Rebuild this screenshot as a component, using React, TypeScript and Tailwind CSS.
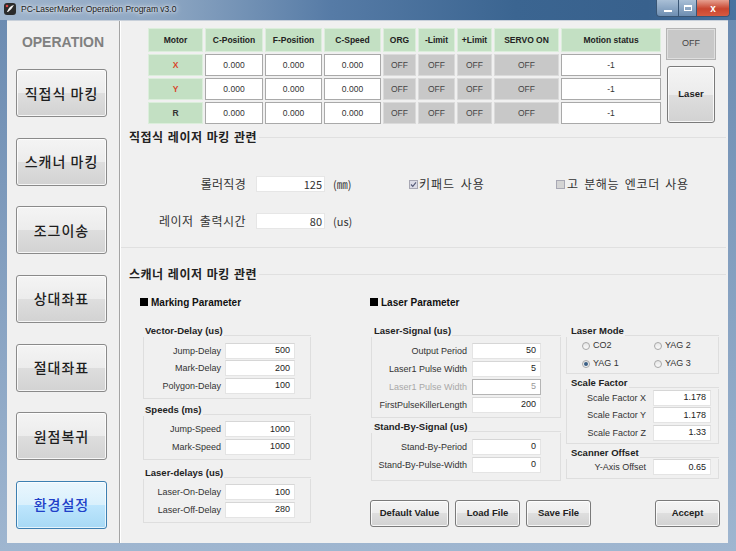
import React from "react";

const FONT = "font-['Liberation_Sans','Noto_Sans_CJK_KR',sans-serif]";
const KR = "font-['Noto_Sans_CJK_KR','Liberation_Sans',sans-serif]";

const COLS = [
  { h: "Motor", w: "w-[55px]" },
  { h: "C-Position", w: "w-[58px]" },
  { h: "F-Position", w: "w-[57px]" },
  { h: "C-Speed", w: "w-[57px]" },
  { h: "ORG", w: "w-[33px]" },
  { h: "-Limit", w: "w-[37px]" },
  { h: "+Limit", w: "w-[35px]" },
  { h: "SERVO ON", w: "w-[65px]" },
  { h: "Motion status", w: "w-[100px]" },
];

function HeadCell({ children, w }: { children: React.ReactNode; w: string }) {
  return (
    <div className={`${w} h-[24px] flex items-center justify-center bg-[#c3e0c3] border border-[#dbeedb] text-[8.5px] font-bold text-[#222]`}>
      {children}
    </div>
  );
}
function MotorCell({ children, red }: { children: React.ReactNode; red?: boolean }) {
  return (
    <div className={`w-[55px] h-[22px] flex items-center justify-center bg-[#c3e0c3] border border-[#dbeedb] text-[8.5px] font-bold ${red ? "text-[#d9452b]" : "text-[#333]"}`}>
      {children}
    </div>
  );
}
function ValCell({ w, children }: { w: string; children: React.ReactNode }) {
  return (
    <div className={`${w} h-[22px] flex items-center justify-center bg-white border border-[#a9a9a9] text-[8.5px] text-[#333]`}>
      {children}
    </div>
  );
}
function OffCell({ w }: { w: string }) {
  return (
    <div className={`${w} h-[22px] flex items-center justify-center bg-[#c8c8c8] border border-[#dadada] text-[8.5px] text-[#444]`}>
      OFF
    </div>
  );
}

function MotorRow({ name, red }: { name: string; red?: boolean }) {
  return (
    <div className="flex gap-[2px]">
      <MotorCell red={red}>{name}</MotorCell>
      <ValCell w="w-[58px]">0.000</ValCell>
      <ValCell w="w-[57px]">0.000</ValCell>
      <ValCell w="w-[57px]">0.000</ValCell>
      <OffCell w="w-[33px]" />
      <OffCell w="w-[37px]" />
      <OffCell w="w-[35px]" />
      <OffCell w="w-[65px]" />
      <ValCell w="w-[100px]">-1</ValCell>
    </div>
  );
}

const navBtn =
  "w-[91px] h-[48px] rounded-[3px] border border-[#8a8a8a] flex items-center justify-center text-[14px] font-medium tracking-[1px] text-[#1e1e1e] shadow-[inset_0_0_0_1px_rgba(255,255,255,0.8)] bg-[linear-gradient(to_bottom,#f4f4f4_0%,#ececec_50%,#dedede_50%,#d2d2d2_100%)]";

function NavButton({ label, active }: { label: string; active?: boolean }) {
  if (active) {
    return (
      <div
        className={`w-[91px] h-[48px] rounded-[3px] border border-[#3c7fb1] flex items-center justify-center text-[14px] font-medium tracking-[1px] text-[#2040c8] shadow-[inset_0_0_0_1px_rgba(255,255,255,0.7)] bg-[linear-gradient(to_bottom,#eaf6fd_0%,#d9f0fc_50%,#bee6fd_50%,#a7d9f5_100%)] ${KR}`}
      >
        {label}
      </div>
    );
  }
  return <div className={`${navBtn} ${KR}`}>{label}</div>;
}

function Field({
  label,
  value,
  labelW,
  inputW,
  gap,
  h,
  disabled,
}: {
  label: string;
  value: string;
  labelW: string;
  inputW: string;
  gap: string;
  h: string;
  disabled?: boolean;
}) {
  return (
    <div className={`flex items-center ${h}`}>
      <div className={`${labelW} text-right text-[9px] leading-[10px] whitespace-nowrap ${disabled ? "text-[#a8a8a8]" : "text-[#333]"}`}>{label}</div>
      <div
        className={`${gap} ${inputW} h-[16px] bg-white flex items-center justify-end pr-[4px] text-[9px] ${
          disabled ? "border border-[#b5b5b5] text-[#9a9a9a]" : "border border-[#e4e4e4] border-t-[#d6d6d6] text-[#222]"
        }`}
      >
        {value}
      </div>
    </div>
  );
}

function GroupLabel({ title, pl = "pl-[2px]" }: { title: string; pl?: string }) {
  return (
    <div className="flex items-end h-[12px]">
      <span className={`${pl} text-[9.5px] font-bold leading-[12px] text-[#222] whitespace-nowrap`}>{title}</span>
      <div className="flex-1 border-b border-[#dedede] ml-[1px] mb-[1px]" />
    </div>
  );
}

function Radio({ label, checked }: { label: string; checked?: boolean }) {
  return (
    <div className="flex items-center gap-[3px] h-[18px]">
      <div className="w-[8px] h-[8px] rounded-full border border-[#a8a8a8] bg-[linear-gradient(to_bottom,#e6e6e6,#fafafa)] flex items-center justify-center">
        {checked && <div className="w-[4px] h-[4px] rounded-full bg-[#3a5f85]" />}
      </div>
      <span className="text-[9px] text-[#333]">{label}</span>
    </div>
  );
}

function SmallButton({ label, w }: { label: string; w: string }) {
  return (
    <div
      className={`${w} h-[27px] rounded-[3px] border border-[#7a7a7a] flex items-center justify-center text-[9.5px] font-bold text-[#222] shadow-[inset_0_0_0_1px_rgba(255,255,255,0.8)] bg-[linear-gradient(to_bottom,#f4f4f4_0%,#ececec_50%,#dedede_50%,#d2d2d2_100%)]`}
    >
      {label}
    </div>
  );
}

function CheckBox({ checked }: { checked?: boolean }) {
  return (
    <svg width="9" height="9" viewBox="0 0 9 9">
      <rect x="0.5" y="0.5" width="8" height="8" fill={checked ? "#dcdce6" : "#d4d4d4"} stroke="#a8a8b4" />
      {checked && <path d="M2 4.5 L3.8 6.4 L7 2.4" fill="none" stroke="#555a78" strokeWidth="1.1" />}
    </svg>
  );
}

export default function App() {
  return (
    <div className={`w-[736px] h-[551px] flex flex-col overflow-hidden bg-[linear-gradient(to_bottom,#6a8ab0,#9fb6d0)] ${FONT}`}>
      {/* Title bar */}
      <div className="h-[20px] flex items-start bg-[linear-gradient(to_right,#9fb4cc_0%,#8ea7c3_22%,#567ba6_45%,#3b6591_70%,#38618d_88%,#4a73a0_100%)]">
        <div className="flex items-center h-[18px] pl-[3px]">
          <svg width="14" height="14" viewBox="0 0 14 14">
            <rect x="1" y="1" width="12" height="12" rx="3" fill="#2b2b2b" />
            <path d="M4 10 Q6 4 11 3 Q9 7 5 10 Z" fill="#f2f2f2" />
            <circle cx="4" cy="4" r="1.3" fill="#d44" />
          </svg>
          <span className="ml-[4px] text-[8.5px] text-[#1a1a1a] [text-shadow:0_0_6px_#fff,0_0_3px_#fff]">
            PC-LaserMarker Operation Program v3.0
          </span>
        </div>
        <div className="ml-auto mr-[6px] flex h-[17px] rounded-b-[4px] border border-t-0 border-[#3a5675] overflow-hidden">
          <div className="w-[22px] flex items-center justify-center bg-[linear-gradient(to_bottom,#a9bfd6,#6e8eb2)] border-r border-[#3a5675]">
            <div className="w-[8px] h-[2px] bg-white mt-[5px]" />
          </div>
          <div className="w-[18px] flex items-center justify-center bg-[linear-gradient(to_bottom,#a9bfd6,#6e8eb2)] border-r border-[#3a5675]">
            <div className="w-[8px] h-[6px] border border-white border-t-2" />
          </div>
          <div className="w-[32px] flex items-center justify-center bg-[linear-gradient(to_bottom,#e6a090,#c8452f_55%,#d65a40)] text-white text-[10px] font-bold">
            x
          </div>
        </div>
      </div>

      {/* Client */}
      <div className="flex-1 ml-[7px] mr-[8px] mb-[8px] flex bg-[#f0f0f0] border-t border-[#c8d0da]">
        {/* Left panel */}
        <div className="w-[113px] border-r border-[#a4a4a4] flex flex-col">
          <div className="mt-[13px] h-[16px] text-center text-[14px] leading-[16px] font-bold text-[#808080]">OPERATION</div>
          <div className="mt-[19px] ml-[9px] flex flex-col gap-[20.67px]">
            <NavButton label="직접식 마킹" />
            <NavButton label="스캐너 마킹" />
            <NavButton label="조그이송" />
            <NavButton label="상대좌표" />
            <NavButton label="절대좌표" />
            <NavButton label="원점복귀" />
            <NavButton label="환경설정" active />
          </div>
        </div>

        {/* Main */}
        <div className="flex-1 border-l border-white flex flex-col">
          {/* Top table */}
          <div className="mt-[7px] ml-[27px] flex">
            <div className="flex flex-col gap-[2px]">
              <div className="flex gap-[2px]">
                {COLS.map((c) => (
                  <HeadCell key={c.h} w={c.w}>
                    {c.h}
                  </HeadCell>
                ))}
              </div>
              <MotorRow name="X" red />
              <MotorRow name="Y" red />
              <MotorRow name="R" />
            </div>
            <div className="ml-[5px] w-[50px] flex flex-col">
              <div className="h-[32px] bg-[#c8c8c8] border border-[#b4b4b4] shadow-[inset_0_0_0_1px_#dedede] flex items-center justify-center text-[9px] text-[#444]">
                OFF
              </div>
              <div className="mt-[6px] ml-[1px] w-[48px] h-[57px] rounded-[3px] border border-[#7a7a7a] flex items-center justify-center text-[9.5px] font-bold text-[#222] shadow-[inset_0_0_0_1px_rgba(255,255,255,0.8)] bg-[linear-gradient(to_bottom,#f4f4f4_0%,#ececec_50%,#dedede_50%,#d2d2d2_100%)]">
                Laser
              </div>
            </div>
          </div>

          {/* Section 1 */}
          <div className="mt-[6px] flex items-center h-[14px]">
            <span className={`ml-[8px] text-[12px] leading-[14px] font-bold tracking-[0.5px] [word-spacing:1px] text-[#222] ${KR}`}>직접식 레이저 마킹 관련</span>
            <div className="flex-1 h-px bg-[#e0e0e0] ml-[2px] mr-[2px]" />
          </div>
          <div className={`border-b border-[#e0e0e0] mr-[2px] ${KR}`}>
            <div className="mt-[32px] flex items-center h-[16px]">
              <div className="w-[125px] text-right text-[12px] tracking-[0.3px] text-[#333]">롤러직경</div>
              <div className="ml-[10px] w-[69px] h-[16px] bg-white border border-[#e6e6e6] flex items-center justify-end pr-[2px] text-[11px] text-[#333]">125</div>
              <div className="ml-[8px] w-[76px] text-[11px] text-[#333]">(㎜)</div>
              <div className="w-[147px] flex items-center gap-[1px]">
                <CheckBox checked />
                <span className="text-[12px] tracking-[1px] [word-spacing:2px] text-[#333]">키패드 사용</span>
              </div>
              <div className="flex items-center gap-[2px]">
                <CheckBox />
                <span className="text-[12px] tracking-[0.7px] [word-spacing:2px] text-[#333]">고 분해능 엔코더 사용</span>
              </div>
            </div>
            <div className="mt-[21px] mb-[18px] flex items-center h-[16px]">
              <div className="w-[125px] text-right text-[12px] tracking-[0.5px] [word-spacing:3px] text-[#333]">레이저 출력시간</div>
              <div className="ml-[10px] w-[69px] h-[16px] bg-white border border-[#e6e6e6] flex items-center justify-end pr-[2px] text-[11px] text-[#333]">80</div>
              <div className="ml-[8px] text-[11px] text-[#333]">(us)</div>
            </div>
          </div>

          {/* Section 2 */}
          <div className="mt-[19px] flex items-center h-[14px]">
            <span className={`ml-[8px] text-[12px] leading-[14px] font-bold tracking-[0.5px] [word-spacing:1px] text-[#222] ${KR}`}>스캐너 레이저 마킹 관련</span>
            <div className="flex-1 h-px bg-[#e0e0e0] ml-[2px] mr-[2px]" />
          </div>

          <div className="mt-[15px] flex">
            {/* Marking Parameter */}
            <div className="ml-[19px] w-[171px] flex flex-col">
              <div className="h-[12px] flex items-center">
                <div className="w-[8px] h-[8px] bg-black" />
                <span className="ml-[3px] text-[10px] font-bold text-[#111]">Marking Parameter</span>
              </div>
              <div className="mt-[17px] ml-[3px] w-[168px] flex flex-col">
                <GroupLabel title="Vector-Delay (us)" />
                <div className="border-x border-b border-[#dedede] pt-[5px] pb-[3px]">
                  <Field label="Jump-Delay" value="500" labelW="w-[77px]" inputW="w-[70px]" gap="ml-[4px]" h="h-[17.5px]" />
                  <Field label="Mark-Delay" value="200" labelW="w-[77px]" inputW="w-[70px]" gap="ml-[4px]" h="h-[17.5px]" />
                  <Field label="Polygon-Delay" value="100" labelW="w-[77px]" inputW="w-[70px]" gap="ml-[4px]" h="h-[17.5px]" />
                </div>
                <div className="mt-[5px]">
                  <GroupLabel title="Speeds (ms)" />
                </div>
                <div className="border-x border-b border-[#dedede] pt-[5px] pb-[3px]">
                  <Field label="Jump-Speed" value="1000" labelW="w-[77px]" inputW="w-[70px]" gap="ml-[4px]" h="h-[17.5px]" />
                  <Field label="Mark-Speed" value="1000" labelW="w-[77px]" inputW="w-[70px]" gap="ml-[4px]" h="h-[17.5px]" />
                </div>
                <div className="mt-[7px]">
                  <GroupLabel title="Laser-delays (us)" />
                </div>
                <div className="border-x border-b border-[#dedede] pt-[5px] pb-[3px]">
                  <Field label="Laser-On-Delay" value="100" labelW="w-[77px]" inputW="w-[70px]" gap="ml-[4px]" h="h-[17.5px]" />
                  <Field label="Laser-Off-Delay" value="280" labelW="w-[77px]" inputW="w-[70px]" gap="ml-[4px]" h="h-[17.5px]" />
                </div>
              </div>
            </div>

            {/* Laser Parameter */}
            <div className="ml-[59px] w-[350px] flex flex-col">
              <div className="h-[12px] flex items-center">
                <div className="w-[8px] h-[8px] bg-black" />
                <span className="ml-[3px] text-[10px] font-bold text-[#111]">Laser Parameter</span>
              </div>
              <div className="mt-[17px] flex">
                {/* Col A */}
                <div className="ml-[1px] w-[190px] flex flex-col">
                  <GroupLabel title="Laser-Signal (us)" pl="pl-[3px]" />
                  <div className="border-x border-b border-[#dedede] pt-[5px] pb-[3px]">
                    <Field label="Output Period" value="50" labelW="w-[95px]" inputW="w-[69px]" gap="ml-[5px]" h="h-[18px]" />
                    <Field label="Laser1 Pulse Width" value="5" labelW="w-[95px]" inputW="w-[69px]" gap="ml-[5px]" h="h-[18px]" />
                    <Field label="Laser1 Pulse Width" value="5" labelW="w-[95px]" inputW="w-[69px]" gap="ml-[5px]" h="h-[18px]" disabled />
                    <Field label="FirstPulseKillerLength" value="200" labelW="w-[95px]" inputW="w-[69px]" gap="ml-[5px]" h="h-[18px]" />
                  </div>
                  <div className="mt-[3px]">
                    <GroupLabel title="Stand-By-Signal (us)" pl="pl-[3px]" />
                  </div>
                  <div className="border-x border-b border-[#dedede] pt-[5px] pb-[6px]">
                    <Field label="Stand-By-Period" value="0" labelW="w-[95px]" inputW="w-[69px]" gap="ml-[5px]" h="h-[18px]" />
                    <Field label="Stand-By-Pulse-Width" value="0" labelW="w-[95px]" inputW="w-[69px]" gap="ml-[5px]" h="h-[18px]" />
                  </div>
                </div>
                {/* Col B */}
                <div className="ml-[5px] w-[153px] flex flex-col">
                  <GroupLabel title="Laser Mode" pl="pl-[5px]" />
                  <div className="border-x border-b border-[#dedede] pl-[15px] grid grid-cols-[72px_auto]">
                    <Radio label="CO2" />
                    <Radio label="YAG 2" />
                    <Radio label="YAG 1" checked />
                    <Radio label="YAG 3" />
                  </div>
                  <div className="mt-[3px]">
                    <GroupLabel title="Scale Factor" pl="pl-[5px]" />
                  </div>
                  <div className="border-x border-b border-[#dedede] pb-[1px]">
                    <Field label="Scale Factor X" value="1.178" labelW="w-[79px]" inputW="w-[58px]" gap="ml-[7px]" h="h-[17.5px]" />
                    <Field label="Scale Factor Y" value="1.178" labelW="w-[79px]" inputW="w-[58px]" gap="ml-[7px]" h="h-[17.5px]" />
                    <Field label="Scale Factor Z" value="1.33" labelW="w-[79px]" inputW="w-[58px]" gap="ml-[7px]" h="h-[17.5px]" />
                  </div>
                  <div className="mt-[3px]">
                    <GroupLabel title="Scanner Offset" pl="pl-[5px]" />
                  </div>
                  <div className="border-x border-b border-[#dedede] pb-[2px]">
                    <Field label="Y-Axis Offset" value="0.65" labelW="w-[79px]" inputW="w-[58px]" gap="ml-[7px]" h="h-[17.5px]" />
                  </div>
                </div>
              </div>
              <div className="mt-[19px] flex gap-[6px]">
                <SmallButton label="Default Value" w="w-[79px]" />
                <SmallButton label="Load File" w="w-[65px]" />
                <SmallButton label="Save File" w="w-[65px]" />
                <div className="ml-auto">
                  <SmallButton label="Accept" w="w-[65px]" />
                </div>
              </div>
            </div>
          </div>
        </div>
      </div>
    </div>
  );
}
